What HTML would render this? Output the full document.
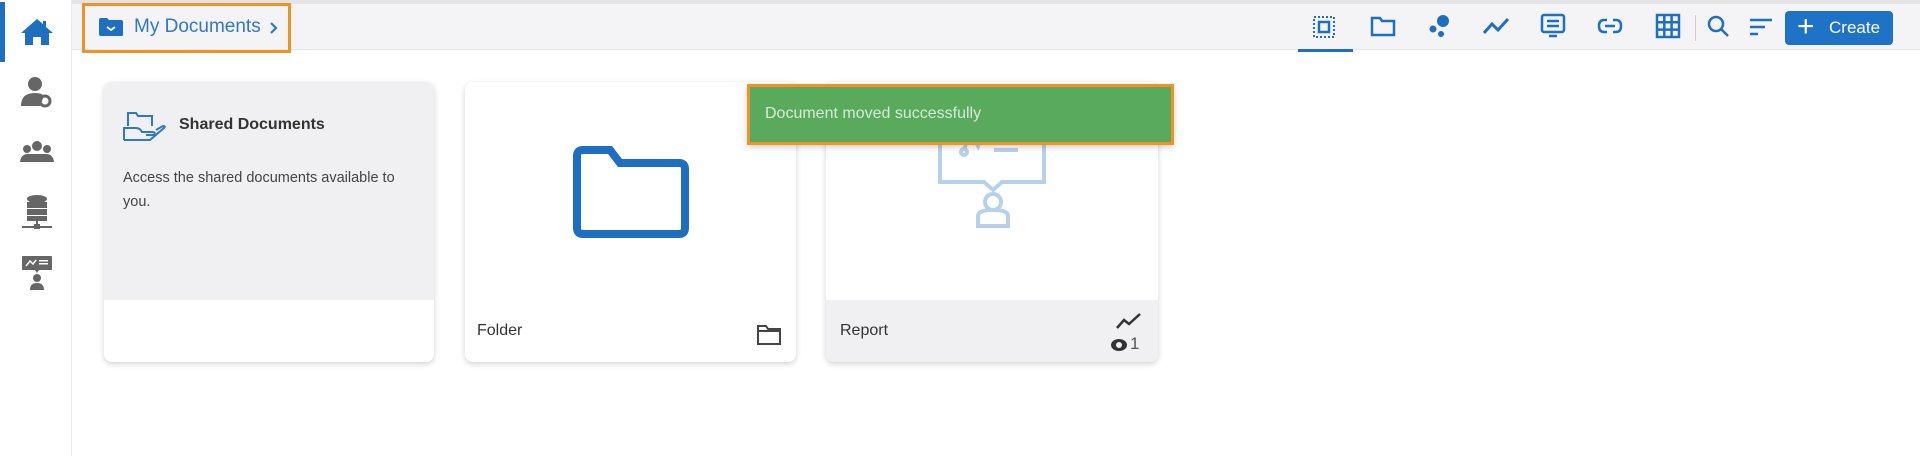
<!DOCTYPE html>
<html><head><style>
*{margin:0;padding:0;box-sizing:border-box}
body{width:1920px;height:456px;background:#fff;font-family:"Liberation Sans",sans-serif;position:relative;overflow:hidden}
.abs{position:absolute}
.topline{left:0;top:0;width:1920px;height:4px;background:#e4e4e6}
.header{left:72px;top:4px;width:1848px;height:46px;background:#f4f4f6;border-bottom:1px solid #e6e6e8}
.side{left:0;top:0;width:72px;height:456px;background:#fff;border-right:1px solid #e8e8ea}
.card{background:#fff;border-radius:8px;box-shadow:0 2px 6px rgba(0,0,0,.18);overflow:hidden}
</style></head><body>
<div class="abs topline"></div>
<div class="abs header"></div>
<div class="abs side"></div>
<div class="abs" style="left:0;top:2px;width:5px;height:60px;background:#1f6fc0"></div>
<svg class="abs" style="left:20px;top:18px" width="34" height="28" viewBox="0 0 34 28"><path d="M17 1 L1 15 L5 15 L5 27 L13 27 L13 19 L21 19 L21 27 L29 27 L29 15 L33 15 L26 9 L26 3 L23 3 L23 6Z" fill="#1f6fc0"/></svg>
<svg class="abs" style="left:20px;top:76px" width="34" height="32" viewBox="0 0 34 32"><circle cx="15" cy="8" r="7" fill="#666"/><path d="M1 30 Q1 17 15 17 Q22 17 24 20 L20 30Z" fill="#666"/><circle cx="25" cy="25" r="5" fill="none" stroke="#666" stroke-width="3"/></svg>
<svg class="abs" style="left:20px;top:140px" width="34" height="24" viewBox="0 0 34 24"><circle cx="17" cy="6" r="5" fill="#666"/><circle cx="7" cy="9" r="4" fill="#666"/><circle cx="27" cy="9" r="4" fill="#666"/><path d="M0 22 Q1 14 8 14 L26 14 Q33 14 34 22Z" fill="#666"/></svg>
<svg class="abs" style="left:22px;top:195px" width="30" height="36" viewBox="0 0 30 36"><ellipse cx="15" cy="4" rx="10" ry="4" fill="#666"/><rect x="5" y="7" width="20" height="6" fill="#666"/><rect x="5" y="14" width="20" height="6" fill="#666"/><rect x="5" y="21" width="20" height="5" fill="#666"/><rect x="14" y="26" width="2" height="6" fill="#666"/><rect x="0" y="31" width="30" height="2" fill="#666"/><rect x="12" y="29" width="6" height="5" fill="#666"/></svg>
<svg class="abs" style="left:21px;top:255px" width="32" height="36" viewBox="0 0 32 36"><rect x="1" y="1" width="30" height="14" rx="1" fill="#666"/><path d="M14 15 L18 15 L16 18Z" fill="#666"/><circle cx="16" cy="23" r="4" fill="#666"/><path d="M9 35 Q9 28 16 28 Q23 28 23 35Z" fill="#666"/><path d="M5 11 L9 6 L12 9 L15 5" stroke="#fff" stroke-width="1.5" fill="none"/><rect x="18" y="5" width="9" height="1.5" fill="#fff"/><rect x="18" y="8" width="9" height="1.5" fill="#fff"/></svg>
<div class="abs" style="left:82px;top:3px;width:209px;height:50px;border:3px solid #ec9426"></div>
<svg class="abs" style="left:98px;top:17px" width="26" height="20" viewBox="0 0 26 20"><path d="M1 3 Q1 1 3 1 L9 1 L11 3 L23 3 Q25 3 25 5 L25 18 Q25 19 23 19 L3 19 Q1 19 1 17Z" fill="#1f6fc0"/><path d="M9 10 L13 13 L17 10" stroke="#fff" stroke-width="1.8" fill="none"/></svg>
<div class="abs" style="left:134px;top:16px;font-size:19px;color:#2f78c4">My Documents</div>
<svg class="abs" style="left:269px;top:21px" width="10" height="14" viewBox="0 0 10 14"><path d="M2 2 L7 7 L2 12" stroke="#2f78c4" stroke-width="2.2" fill="none"/></svg>
<svg class="abs" style="left:1312px;top:15px" width="24" height="24" viewBox="0 0 24 24" fill="none" stroke="#1f6fc0"><rect x="2" y="2" width="20" height="20" stroke-dasharray="2 2" stroke-width="2"/><rect x="7" y="7" width="10" height="10" stroke-width="2.5"/></svg>
<div class="abs" style="left:1298px;top:49px;width:55px;height:3px;background:#1f6fc0"></div>
<svg class="abs" style="left:1370px;top:15px" width="26" height="22" viewBox="0 0 26 22" fill="none" stroke="#1f6fc0" stroke-width="2.5"><path d="M2 3 L10 3 L12 6 L24 6 L24 20 L2 20Z"/></svg>
<svg class="abs" style="left:1428px;top:14px" width="24" height="24" viewBox="0 0 24 24" fill="#1f6fc0"><circle cx="15" cy="7" r="6"/><circle cx="5" cy="15" r="3.5"/><circle cx="13" cy="20" r="3"/></svg>
<svg class="abs" style="left:1482px;top:16px" width="28" height="20" viewBox="0 0 28 20" fill="none" stroke="#1f6fc0" stroke-width="3"><path d="M2 17 L10 8 L16 14 L26 3"/></svg>
<svg class="abs" style="left:1540px;top:13px" width="26" height="26" viewBox="0 0 26 26" fill="none" stroke="#1f6fc0" stroke-width="2.5"><rect x="2" y="2" width="22" height="17" rx="2"/><path d="M7 8h12M7 13h12M9 23h8"/></svg>
<svg class="abs" style="left:1597px;top:17px" width="26" height="18" viewBox="0 0 26 18" fill="none" stroke="#1f6fc0" stroke-width="2.5"><path d="M10 3 L7 3 Q2 3 2 9 Q2 15 7 15 L10 15 M16 3 L19 3 Q24 3 24 9 Q24 15 19 15 L16 15 M8 9 L18 9"/></svg>
<svg class="abs" style="left:1655px;top:13px" width="26" height="26" viewBox="0 0 26 26" fill="none" stroke="#1f6fc0" stroke-width="2.5"><rect x="2" y="2" width="22" height="22"/><path d="M9.3 2v22M16.6 2v22M2 9.3h22M2 16.6h22"/></svg>
<div class="abs" style="left:1695px;top:15px;width:1px;height:26px;background:#ccc"></div>
<svg class="abs" style="left:1706px;top:14px" width="24" height="24" viewBox="0 0 24 24" fill="none" stroke="#1f6fc0" stroke-width="2.5"><circle cx="10" cy="10" r="7"/><path d="M15 15 L22 22"/></svg>
<svg class="abs" style="left:1749px;top:17px" width="24" height="20" viewBox="0 0 24 20" fill="none" stroke="#1f6fc0" stroke-width="2.5"><path d="M1 3h22M1 10h15M1 17h8"/></svg>
<div class="abs" style="left:1785px;top:11px;width:108px;height:34px;background:#1f73c6;border-radius:4px;color:#fff;font-size:17px;line-height:34px"><span style="position:absolute;left:12px;top:-1px;font-size:30px;font-weight:300">+</span><span style="position:absolute;left:44px">Create</span></div>
<div class="abs card" style="left:104px;top:82px;width:330px;height:280px">
<div style="position:absolute;left:0;top:0;width:330px;height:218px;background:#f0f0f2"></div>
<svg style="position:absolute;left:18px;top:28px" width="46" height="32" viewBox="0 0 46 32" fill="none" stroke="#2f78c4" stroke-width="2"><path d="M6 16 L6 3 L14 3 L16 6 L30 6 L30 16"/><path d="M2 30 L2 18 L14 18 Q18 18 20 22 L30 22 Q34 22 32 25 L24 25 M2 30 L28 30 L42 18 Q44 16 41 16 L34 20"/></svg>
<div style="position:absolute;left:75px;top:34px;font-size:16px;font-weight:bold;color:#333">Shared Documents</div>
<div style="position:absolute;left:19px;top:84px;width:300px;font-size:14.5px;line-height:24px;color:#444">Access the shared documents available to you.</div>
</div>
<div class="abs card" style="left:465px;top:82px;width:331px;height:280px">
<svg style="position:absolute;left:107px;top:64px" width="118" height="92" viewBox="0 0 118 92" fill="none" stroke="#1f6fc0" stroke-width="8"><path d="M5 10 Q5 4 11 4 L38 4 L48 17 L107 17 Q113 17 113 23 L113 82 Q113 88 107 88 L11 88 Q5 88 5 82Z"/></svg>
<div style="position:absolute;left:12px;top:240px;font-size:16px;color:#333">Folder</div>
<svg style="position:absolute;left:291px;top:242px" width="26" height="22" viewBox="0 0 26 22" fill="none" stroke="#444" stroke-width="2"><path d="M2 2 L10 2 L12 5 L24 5 L24 20 L2 20Z M2 7 L24 7"/></svg>
</div>
<div class="abs card" style="left:826px;top:82px;width:332px;height:280px">
<div style="position:absolute;left:0;top:218px;width:332px;height:62px;background:#f0f0f2"></div>
<svg style="position:absolute;left:112px;top:28px" width="110" height="120" viewBox="0 0 110 120" fill="none" stroke="#b6d2ea" stroke-width="4"><path d="M2 2 L106 2 L106 72 L64 72 L55 80 L46 72 L2 72Z"/><circle cx="55" cy="92" r="8"/><path d="M40 116 L40 106 Q40 100 55 100 Q70 100 70 106 L70 116Z"/><path d="M26 40 L32 22 L40 36 L46 18" /><circle cx="26" cy="42" r="3"/><circle cx="46" cy="17" r="3"/><path d="M56 20h36M56 30h30M56 40h24"/></svg>
<div style="position:absolute;left:14px;top:240px;font-size:16px;color:#333">Report</div>
<svg style="position:absolute;left:289px;top:230px" width="28" height="18" viewBox="0 0 28 18" fill="none" stroke="#333" stroke-width="2.5"><path d="M2 16 L9 8 L14 12 L25 2"/></svg>
<svg style="position:absolute;left:284px;top:256px" width="18" height="14" viewBox="0 0 18 14"><ellipse cx="9" cy="7" rx="8" ry="6" fill="#333"/><circle cx="9" cy="7" r="3" fill="#f0f0f2"/></svg>
<div style="position:absolute;left:304px;top:252px;font-size:17px;color:#555">1</div>
</div>
<div class="abs" style="left:747px;top:84px;width:427px;height:61px;background:#5aaa5e;border:3px solid #ec9426;box-shadow:0 2px 6px rgba(0,0,0,.2)"></div>
<div class="abs" style="left:765px;top:105px;font-size:16px;color:#d6ecd3">Document moved successfully</div>
</body></html>
